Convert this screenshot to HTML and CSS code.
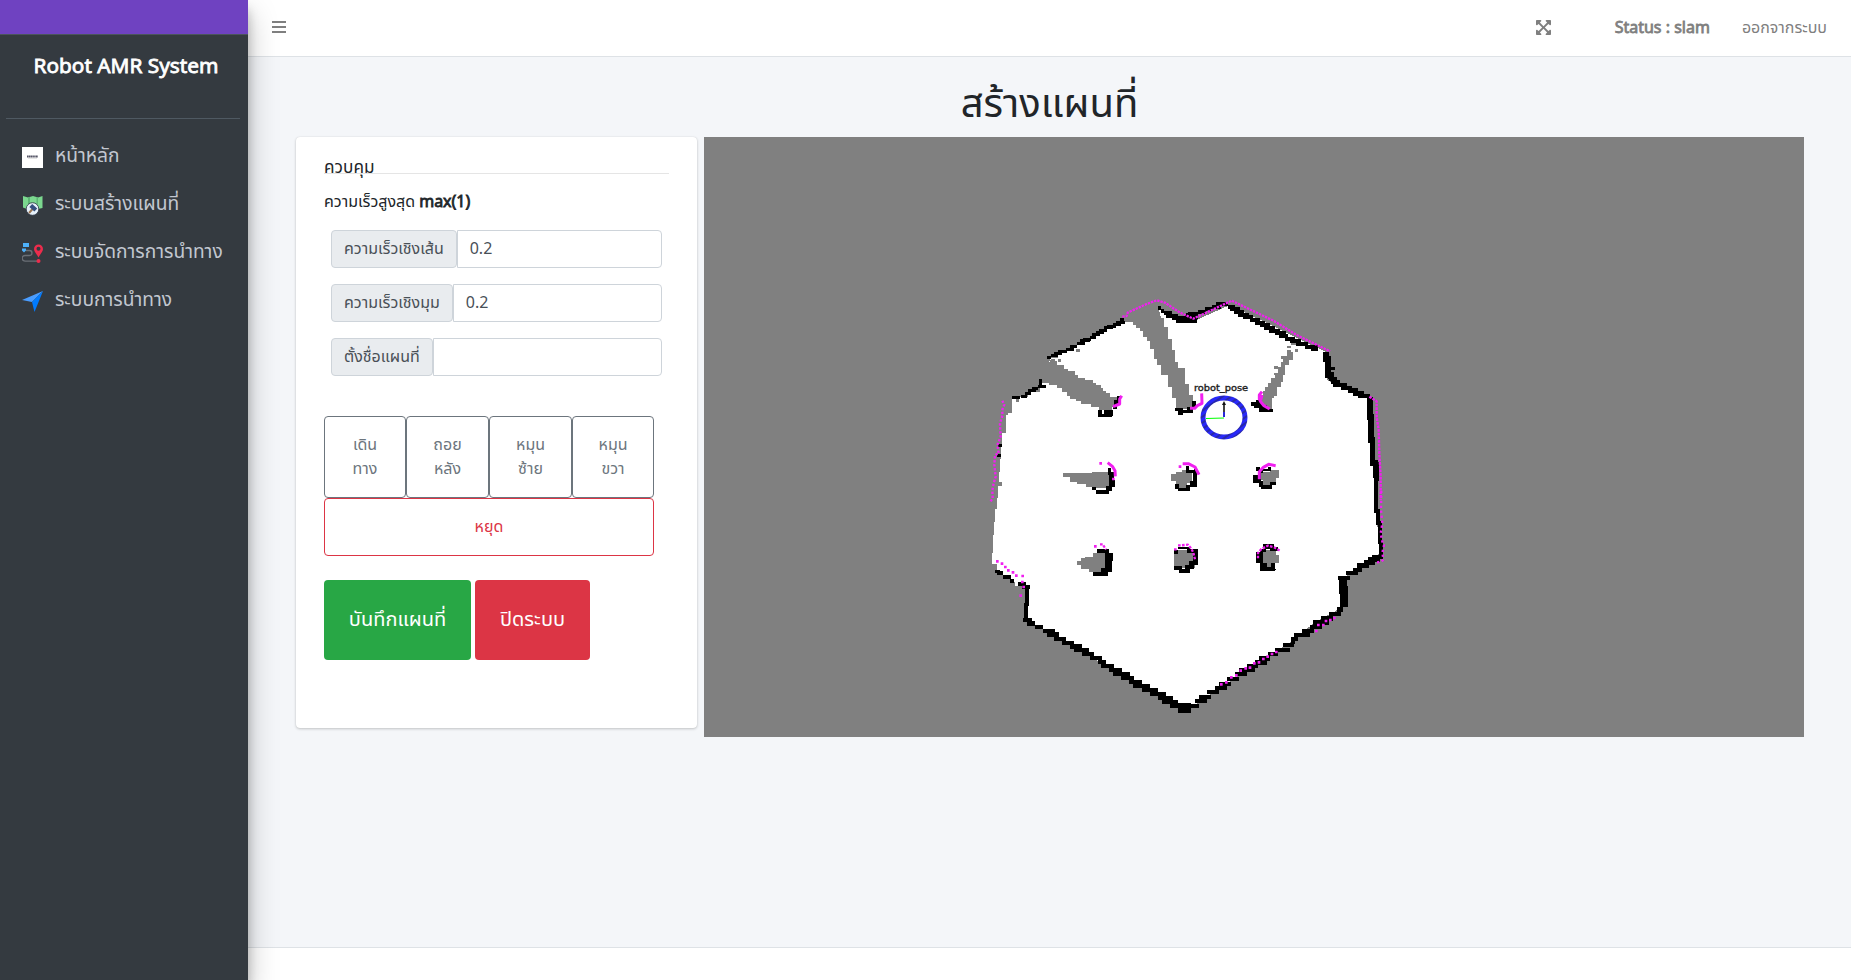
FILE: index.html
```html
<!DOCTYPE html>
<html lang="th">
<head>
<meta charset="utf-8">
<title>Robot AMR System</title>
<link rel="stylesheet" href="styles.css">
</head>
<body>
<div class="app">
  <aside class="sidebar">
    <div class="accent"></div>
    <div class="brand">Robot AMR System</div>
    <nav class="menu">
      <a class="item"><svg class="ico" viewBox="0 0 21 21"><path fill="#fff" d="M0 0h21v21H0z"/><path stroke="#556" stroke-width="2" stroke-dasharray="1.500 .3" d="M5 9.500h11"/><path stroke="#ccc" stroke-width=".6" d="M6 11.400h9"/></svg><span>หน้าหลัก</span></a>
      <a class="item"><svg class="ico" viewBox="0 0 21 21"><path fill="#7bd88f" d="M1 1l5 1.500 5-1.500 5 1.500 4.500-1.500v12l-4.500 1-5-1-5 1.500-5-2z"/><path fill="#5cb574" d="M6 2.500l2-.7v10l-2 1zM14.500 2l1.500.5v10l-1.500-.5z"/><circle cx="10.500" cy="14" r="6.300" fill="#e6f0fa" stroke="#2b3442" stroke-width=".8"/><path stroke="#9b7653" stroke-width="2" d="M7 18l4-4.500"/><path stroke="#36507f" stroke-width="4.200" d="M8.800 10.500l5 4.500"/></svg><span>ระบบสร้างแผนที่</span></a>
      <a class="item"><svg class="ico" viewBox="0 0 21 21"><path fill="#4db1fa" d="M1 0h6v4H1zM0 5.500h4v2L2 9.500 0 7.500z"/><path fill="none" stroke="#6a6f76" stroke-width="1.300" d="M4 7.500h3.500a2.500 2.500 0 0 1 0 5H3a2.800 2.800 0 0 0 0 5.600h13"/><path fill="#ec2c4c" fill-rule="evenodd" d="M16.500 14.500C14 10 12 8.500 12 6a4.500 4.500 0 0 1 9 0c0 2.500-2 4-4.500 8.500zM16.500 3.700a2 2 0 1 0 0 4 2 2 0 0 0 0-4z"/><circle cx="16.500" cy="18" r="2" fill="#ec2c4c"/></svg><span>ระบบจัดการการนำทาง</span></a>
      <a class="item"><svg class="ico" viewBox="0 0 21 21"><path fill="#4a9dff" d="M21 0L0 9l10 2z"/><path fill="#007bff" d="M21 0L10 11l2.500 10z"/></svg><span>ระบบการนำทาง</span></a>
    </nav>
  </aside>
  <div class="page">
    <header class="topbar">
      <svg class="bars" viewBox="0 0 14 12"><path fill="#7f7f7f" d="M0 0h14v2H0zM0 5h14v2H0zM0 10h14v2H0z"/></svg>
      <svg class="expand" viewBox="0 0 448 448"><path fill="#7f7f7f" d="M448 312v112a24 24 0 0 1-24 24H312c-21 0-32-26-17-41l36-36-107-107-107 107 36 36c15 15 5 41-17 41H24a24 24 0 0 1-24-24V312c0-21 26-32 41-17l36 36 107-107L77 117l-36 36c-15 15-41 5-41-17V24A24 24 0 0 1 24 0h112c21 0 32 26 17 41l-36 36 107 107L331 77l-36-36c-15-15-5-41 17-41h112a24 24 0 0 1 24 24v112c0 21-26 32-41 17l-36-36-107 107 107 107 36-36c15-15 41-5 41 17z"/></svg>
      <span class="status">Status : slam</span>
      <span class="logout">ออกจากระบบ</span>
    </header>
    <main class="content">
      <h1 class="title">สร้างแผนที่</h1>
      <div class="panels">
        <section class="card">
          <div class="legend">ควบคุม</div>
          <div class="limit">ความเร็วสูงสุด <b>max(1)</b></div>
          <div class="fields">
            <label class="group"><span class="addon">ความเร็วเชิงเส้น</span><span class="input">0.2</span></label>
            <label class="group"><span class="addon">ความเร็วเชิงมุม</span><span class="input">0.2</span></label>
            <label class="group"><span class="addon">ตั้งชื่อแผนที่</span><span class="input"></span></label>
          </div>
          <div class="pad">
            <button class="btn">เดิน<br>ทาง</button><button class="btn">ถอย<br>หลัง</button><button class="btn">หมุน<br>ซ้าย</button><button class="btn">หมุน<br>ขวา</button>
            <button class="btn stop">หยุด</button>
          </div>
          <div class="actions"><button class="big save">บันทึกแผนที่</button><button class="big off">ปิดระบบ</button></div>
        </section>
        <svg class="map" viewBox="704 137 1100 600">
          <defs><pattern id="hatch" width="5" height="5" patternUnits="userSpaceOnUse" patternTransform="rotate(55)"><path fill="#2828fa" d="M0 0h5v5H0z"/><path fill="#2828a8" d="M0 0h2v5H0z"/></pattern></defs>
          <g transform="translate(980 280) scale(.33333)" shape-rendering="crispEdges">
            <path fill="#fff" d="M97 356H120V350H145V335H180V318L212 235H235V220L300 190L428 125L540 90L575 115L645 122L750 75L1035 215L1040 300L1165 355L1185 660L1200 820L1135 870L1085 895L1090 980L1000 1030L935 1085L770 1190L645 1275L600 1285L430 1190L300 1110L215 1060L140 1025V917H104V906H90V893H70V877H50V852H37V820H39V765H42V725H46V687H50V655H53V618H66V606H56V575H60V537H64V493H67V459H78V405H84V398H97z"/>
            <g fill="#808080">
              <path d="M180 300L212 238H226V244H232V256H252V266H264V274H285V285H293V293H314V301H338V308H347V315H362V325H370V334H378V340H389V350H410V380H396V391H358V381H333V372H303V364H288V356H271V347H260V336H246V325H232V316H206V308H180z"/>
              <path d="M428 125L535 80L543 114H553V142H564V176H576V210H585V246H595V264H614V312H626V345H639V372H646V388H588V354H575V322H564V286H542V254H532V238H523V206H511V184H500V172H488V152H480V144H467V136H458V125z"/>
              <path d="M846 388V345H850V333H856V322H865V310H873V293H885V278H893V260H904V247H910V228H922V210H934V215H940V239H927V256H916V284H908V307H902V322H892V347H882V353H876V388zM882 259h12v9h-12zM882 278h9v7h-9zM902 228h10v9h-10zM920 198h13v7h-13zM934 182h20v12h-20zM945 207h10v8h-10zM288 207h12v9h-12zM234 237h9v9h-9zM108 358h10v9h-10z"/>
              <path d="M249 579H337V575H392V625H348V620H318V612H292V605H270V591H249zM573 582H587V575H605V569H635V608H622V625H598V616H587V602H573zM842 575H870V571H896V594H889V605H881V615H850V600H842z"/>
              <path d="M291 843H303V833H315V831H338V818H385V876H327V867H303V854H291zM582 810H645V865H582zM840 810H887V825H897V849H875V860H840z"/>
            </g>
            <g fill="none" stroke="#000" stroke-width="9">
              <path d="M201 233h12m-1-6h23m-12-5h24m-13-7h27m-4-7h24m-10-8h21m-2-8h24m-13-9h30m-22-4h24m-4-7h18m-10-7h22m-10-7h22m-13-7h23m-8-7h25m-18-4h27m-8-7h24m-14-6h25m-13-7h12"/>
              <path d="M97 353h22M122 349h20M134 341h20M143 332h24M156 325h18M174 320h24M181 298V320M53 496h12M51 528h12"/>
              <path stroke-width="12" d="M535 84h8m0 8h9m0 8h25m-20 7h38m-18 8h58m-46 8h62m-37-12h40m-35-6h18m-12-4h30m-2-6h26m-4-7h25m-4-8h28m-16-8h37m0 8h20m-16 8h32m-19 8h30m-19 8h33m-17 8h31m-10 8h30m-14 8h30m-16 8h30m-17 8h32m-18 8h33m-14 8h33m-22 8h27m-10 8h30m-14 8h32m-13 8h36m-10 8h38m-20 8h22"/>
              <path stroke-width="18" d="M1038 215V238H1045V262H1043V286H1052V298"/>
              <path stroke-width="13" d="M1047 298h23M1052 306h28M1060 315h42M1082 324h34M1104 332h30M1118 341h34M1134 349h36"/>
              <path stroke-width="8" d="M1052 266h13"/>
              <path stroke-width="17" d="M1170 352V412H1174V480H1178V550H1187V555H1189V595H1188"/>
              <path stroke-width="12" d="M1187 595V658H1189V692H1195V730H1200V785H1202V835"/>
              <path stroke-width="13" d="M1175 831h33M1165 839h34M1152 848h34M1132 857h34M1119 870h26M1119 880h14M1098 880h30M1074 895h36"/>
              <path stroke-width="24" d="M1089 893V930H1091V980"/>
              <path stroke-width="13" d="M1070 989h20M1047 1002h36M1024 1016h36M1000 1028h47M990 1042h35M966 1054h36M943 1066h47M932 1078h23M910 1096h33M932 1087h12M885 1110h45M863 1122h32M838 1136h33M826 1148h34M800 1158h35M778 1170h46M765 1183h35M742 1197h34M717 1212h35M705 1224h35M682 1236h34M657 1251h35M645 1264h36M630 1278h27"/>
              <path stroke-width="13" d="M130 1020h25M141 1031h24M165 1042h24M189 1054h36M200 1064h36M222 1077h36M246 1089h36M270 1100h36M282 1111h46M306 1123h35M330 1135h35M354 1147h23M363 1159h38M388 1171h37M400 1183h49M424 1194h37M448 1206h38M460 1218h49M486 1230h47M509 1242h48M534 1254h46M546 1266h48M570 1278h36"/>
              <path stroke-width="28" d="M594 1284h39"/>
              <path stroke-width="11" d="M138 1020V974H141V918M45 875h15M50 879h18M69 891h23M90 903h12M114 912h24M126 921h23"/>
            </g>
            <g fill="#000">
              <path d="M401 359H411V347H419V373H411V388H399V407H397V411H354V390H366V402H372V391H399V377H401zM586 385H608V390H622V380H637V364H648V388H640V400H610V404H594V392H586zM828 360H846V376H860V386H878V395H836V384H823V377H814V366H828z"/>
              <path d="M384 564H393V576H403V600H405V622H395V634H387V641H348V630H337V622H348V629H378V618H388V585H384zM618 558H628V569H641V567H651V622H630V633H594V626H586V612H596V624H618V614H631V602H640V578H618zM829 562H840V567H863V561H874V573H850V580H843V602H850V614H870V605H889V614H876V627H844V620H836V608H820V585H834V574H829z"/>
              <path d="M351 807H386V819H399V843H396V876H384V888H339V876H363V864H375V842H375V820H351zM594 800H630V808H654V854H642V866H630V878H597V870H582V858H605V868H614V856H628V844H638V820H620V808H594V822H582V810H594zM828 816H840V806H850V792H882V800H893V812H870V808H858V816H849V849H862V860H873V850H885V867H888V870H885V872H840V848H828z"/>
            </g>
          </g>
          <g transform="translate(980 280) scale(.33333)" fill="none" stroke="#f020f0" stroke-width="7" stroke-linejoin="round">
            <path stroke-dasharray="7 3" d="M427 110L440 108L443 98L500 72L530 61L555 68L600 98L640 116L700 88L755 62L880 122L950 165L1050 214"/>
            <path stroke-dasharray="8 3" d="M1168 350L1190 364V410L1196 450L1198 520L1202 590V660"/>
            <path stroke-dasharray="7 8" d="M1204 632L1203 690L1207 730L1202 760L1208 790L1212 795L1207 818L1210 838L1205 845L1185 848"/>
            <path stroke-dasharray="7 5" d="M67 362L73 374L66 392L68 404L60 430L62 470L52 495L56 520L45 525L43 555L47 590L41 610L37 632L38 655L29 668"/>
            <path stroke-width="9" d="M630 385H644L652 377L666 370L665 340M846 335L838 345V357L842 365L852 377L869 387M846 345L842 360M399 380L419 372V357L425 347M608 551H625L645 561L657 584M838 598V575L850 562L866 553L887 557M383 548L397 559L405 572L406 589"/>
            <path stroke-width="8" d="M358 550h8M596 560h8M396 597h8M342 799h8"/>
            <path stroke-dasharray="8 4" d="M360 793h8l5 8 5 8M582 808h8m4-12h10l20-2 10 12 6 12 5 20M834 835v-16l10-12 20-10 18 5 18 10"/>
            <path stroke-width="8" d="M48 844h8M62 851h8M72 861h8M81 871h8M95 877h8M105 887h8M124 888h8M123 906h8M127 921h8M118 947h8"/>
            <path stroke-width="8" d="M720 1213h8M735 1207h8M750 1192h8M765 1186h8M778 1172h8M793 1165h8M806 1163h8M819 1150h8M833 1147h8M846 1137h8M859 1130h8M872 1122h8M885 1116h8M1005 1053h8M1011 1035h8M1026 1035h8M1034 1023h8M1047 1020h8M1059 1014h8"/>
          </g>
          <ellipse cx="1224" cy="417.500" rx="21" ry="19.500" fill="none" stroke="url(#hatch)" stroke-width="5"/>
          <path stroke="#0f0" d="M1206 418.500l18-.5"/><path stroke="#111" stroke-width="1.600" d="M1224 417v-14"/><path stroke="#22f" stroke-width="1.600" d="M1224 417v-5"/><path fill="#111" d="M1222 405l2-4 2 4z"/>
          <text x="1194" y="390.500" class="pose" textLength="54" lengthAdjust="spacingAndGlyphs">robot_pose</text>
        </svg>
      </div>
    </main>
    <footer class="footer"></footer>
  </div>
</div>
</body>
</html>
```
FILE: styles.css
```css
*{box-sizing:border-box}
body{margin:0;font:400 16px/24px "Noto Sans","Noto Sans Thai",sans-serif;color:#212529;background:#f4f6f9}
.app{display:flex;height:980px;overflow:hidden}
.sidebar{width:248px;flex:none;background:#343a40;box-shadow:0 14px 28px rgba(0,0,0,.25),0 10px 10px rgba(0,0,0,.22);z-index:1}
.accent{height:35px;background:#6f42c1;border-bottom:1px solid #4b545c}
.brand{margin:0 8px 0 6px;height:84px;padding:15px 0 0 27.5px;font-size:20.8px;line-height:30px;color:#fff;border-bottom:1px solid #4f5962;white-space:nowrap;-webkit-text-stroke:.8px #fff}
.menu{padding:13px 0 0 22px}
.item{display:flex;align-items:center;gap:12px;height:48px;padding-bottom:3px;font-size:19.2px;color:#c2c7d0;white-space:nowrap}
.ico{width:21px;height:21px;flex:none;margin-top:6px}
.page{flex:1;min-width:0;display:flex;flex-direction:column}
.topbar{height:57px;flex:none;background:#fff;border-bottom:1px solid #dee2e6;display:flex;align-items:center;padding:0 24px 2px;color:#7f7f7f;white-space:nowrap}
.bars{width:14px;height:12px}
.expand{width:15px;height:15px;margin-left:auto}
.status{margin-left:63.5px;-webkit-text-stroke:.8px #7f7f7f}
.logout{margin-left:32px}
.content{flex:1;padding:20px 47px 0 48px}
.title{margin:0;height:60px;font-weight:400;font-size:40px;line-height:48px;text-align:center;padding:1px 1px 0 0}
.panels{display:flex;gap:7px;align-items:flex-start}
.card{width:401px;height:591px;background:#fff;border-radius:4px;box-shadow:0 0 1px rgba(0,0,0,.125),0 1px 3px rgba(0,0,0,.2);padding:18px 28px}
.legend{height:19px;border-bottom:1px solid #e5e5e5;font-size:17.2px}
.limit{margin-top:15px}
.limit b{font-weight:400;-webkit-text-stroke:.8px #212529}
.fields{padding:17px 7px 0;display:grid;gap:16px}
.group{display:flex;height:38px}
.addon{background:#e9ecef;border:1px solid #ced4da;border-radius:4px;padding:5px 12px;color:#495057;white-space:nowrap}
.input{flex:1;border:1px solid #ced4da;border-radius:0 4px 4px 0;padding:5px 12px;color:#495057}
.pad{display:grid;grid-template-columns:82px 83px 83px 82px;width:330px;margin-top:40px}
.btn{font:inherit;background:#fff;border:1px solid #6c757d;color:#6c757d;border-radius:4px;height:82px;padding:0 0 2px}
.stop{grid-column:1/5;height:58px;border-color:#dc3545;color:#dc3545}
.actions{display:flex;gap:4px;margin-top:24px}
.big{font:inherit;font-size:20px;height:80px;border:0;border-radius:4px;color:#fff;padding:0 0 2px;white-space:nowrap}
.save{width:147px;background:#28a745}
.off{width:115px;background:#dc3545}
.map{width:1100px;height:600px;background:#808080;flex:none}
.pose{font:9.5px "DejaVu Sans",sans-serif;fill:#222;stroke:#222;stroke-width:.4px}
.footer{height:33px;flex:none;background:#fff;border-top:1px solid #dee2e6}
```
